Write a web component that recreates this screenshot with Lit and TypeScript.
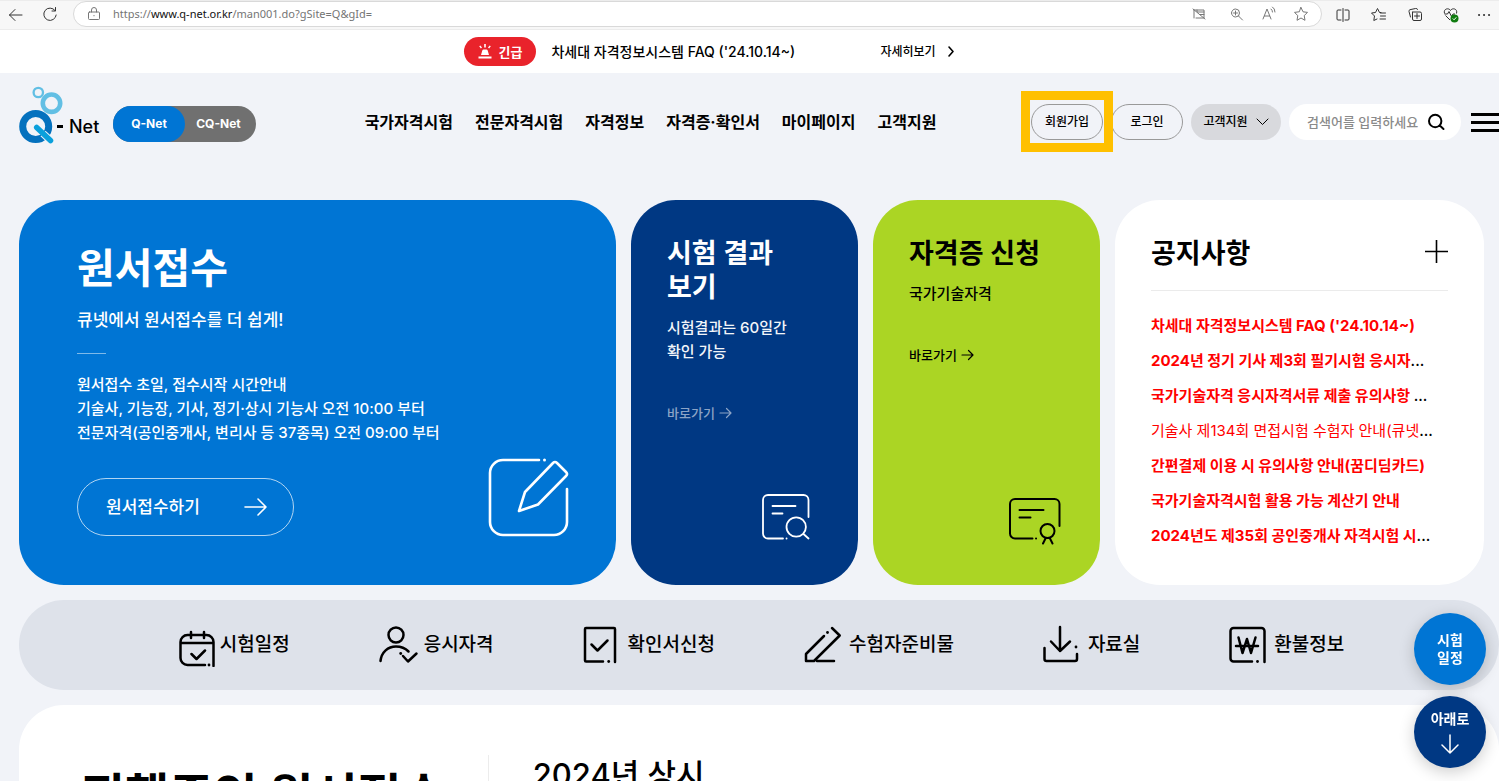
import { LitElement, html, css, svg, nothing } from "lit";
import { customElement } from "lit/decorators.js";

const line = (d: string, w = 20, h = 20, sw = 1) => html`
  <svg width=${w} height=${h} viewBox="0 0 ${w} ${h}" fill="none" stroke="currentColor" stroke-width=${sw}
    stroke-linecap="round" stroke-linejoin="round" aria-hidden="true"><path d=${d} /></svg>`;

const NAV = ["국가자격시험", "전문자격시험", "자격정보", "자격증·확인서", "마이페이지", "고객지원"];

const NOTICES = [
  { text: "차세대 자격정보시스템 FAQ ('24.10.14~)", cut: false, bold: true },
  { text: "2024년 정기 기사 제3회 필기시험 응시자", cut: true, bold: true },
  { text: "국가기술자격 응시자격서류 제출 유의사항 ", cut: true, bold: true },
  { text: "기술사 제134회 면접시험 수험자 안내(큐넷", cut: true, bold: false },
  { text: "간편결제 이용 시 유의사항 안내(꿈디딤카드)", cut: false, bold: true },
  { text: "국가기술자격시험 활용 가능 계산기 안내", cut: false, bold: true },
  { text: "2024년도 제35회 공인중개사 자격시험 시", cut: true, bold: true },
];

const QUICK = [
  { label: "시험일정", w: 36, h: 44, dot: [30, 42], d: "M34.5 43V19a7 7 0 0 0-7-7h-19a7 7 0 0 0-7 7v16a7 7 0 0 0 7 7H26M2 20H34M12 9v6M25 9v6M12.5 31l5 5 8.5-8.5" },
  { label: "응시자격", w: 40, h: 40, dot: [21.7, 28.5], d: "M9.5 10a7.5 7.5 0 1 0 15 0a7.5 7.5 0 1 0-15 0M1.5 36C2.5 27 9 21.5 17 21.5C22 21.5 26 23 29.5 26.5M24 31l5 5.5 8.5-8" },
  { label: "확인서신청", w: 40, h: 40, dot: [25.7, 36.5], d: "M32 37V4a1 1 0 0 0-1-1H3a1 1 0 0 0-1 1V35.500a1 1 0 0 0 1 1H20M8.500 19.500l6 6 10-10" },
  { label: "수험자준비물", w: 40, h: 40, dot: [23.5, 7.5], d: "M20 11L2 29V36H10L35.700 10.500L28 3M13 36H30" },
  { label: "자료실", w: 40, h: 40, dot: [33, 22], d: "M17 2V26M8 16.500L17 26L27 16.500M1.500 23V34a2 2 0 0 0 2 2H32a2 2 0 0 0 2-2V29" },
  { label: "환불정보", w: 40, h: 40, dot: [28.5, 36.5], d: "M35.500 37V6a3 3 0 0 0-3-3H4.500a3 3 0 0 0-3 3V33.500a3 3 0 0 0 3 3H23M9.500 12.500L13.500 28L18 14L22 28L26.500 12.500M7 21H29" },
];

@customElement("browser-bar")
export class BrowserBar extends LitElement {
  static styles = css`
    :host { display: flex; align-items: center; flex: none; height: 30px; background: #f7f7f7;
      border-bottom: 1px solid #ececec; border-top: 1px solid #ececec; color: #333; }
    svg { display: block; }
    button { display: grid; place-items: center; flex: none; width: 36px; height: 26px; padding: 0; border: 0; background: none; color: inherit; }
    .left { display: flex; width: 73px; }
    .back { width: 32px; }
    .last { width: 30px; }
    .address { display: flex; flex: 1; align-items: center; height: 24px; padding: 0 4px 0 10px; margin: 0 3px 2px 0;
      border: 1px solid #d9d9d9; border-radius: 13px; background: #fff; color: #777; }
    .address button { width: 32px; }
    .address .lock { width: 20px; margin-right: 9px; }
    .url { flex: 1; font: 11px/16px "Noto Sans", "Open Sans", sans-serif; color: #757575; }
    .host { color: #111; }
    .address .wide { margin-right: 6px; }
  `;
  render() {
    return html`
      <div class="left">
        <button class="back" aria-label="뒤로">${line("M16 10H3.500M9 4.500L3.500 10L9 15.500")}</button>
        <button aria-label="새로 고침">${line("M15 5.500A6.200 6.200 0 1 0 16.200 10M15.500 2.500V6H12")}</button>
      </div>
      <div class="address">
        <button class="lock" aria-label="사이트 정보">${line("M5.500 8h9a1 1 0 0 1 1 1v5.500a1 1 0 0 1-1 1h-9a1 1 0 0 1-1-1V9a1 1 0 0 1 1-1zM7.500 8V6a2.500 2.500 0 0 1 5 0v2M9.800 11.700h.4")}</button>
        <span class="url">https://<span class="host">www.q-net.or.kr</span>/man001.do?gSite=Q&amp;gId=</span>
        <button class="wide" aria-label="카메라 차단됨">${line("M5 6h10v8h-8M5 6v8M4 5l12 10M8 6v2h7M11 10.500h4")}</button>
        <button aria-label="확대">${line("M4.500 9a4 4 0 1 0 8 0a4 4 0 1 0-8 0M11.500 12l4 4M8.500 7v4M6.500 9h4")}</button>
        <button aria-label="소리내어 읽기">${line("M4 15L8 5L12 15M5.400 12H10.600M12 5q1.500 1 1.500 3M13.500 3q2.500 1.500 2.500 5")}</button>
        <button aria-label="즐겨찾기 추가">${line("M10 3.500l2 4.300 4.500.6-3.300 3.200.8 4.700-4-2.300-4 2.300.8-4.700-3.300-3.200 4.500-.6z")}</button>
      </div>
      <button aria-label="화면 분할">${line("M8 5H5a1 1 0 0 0-1 1v8a1 1 0 0 0 1 1h3M12 5h3a1 1 0 0 1 1 1v8a1 1 0 0 1-1 1h-3M10 3.500v13")}</button>
      <button aria-label="즐겨찾기">${line("M12 7.500L10.500 7.500L8.500 3.500L6.500 7.500L2.500 8L5.500 11L4.800 15.500L8 14M11.500 8h5M11.500 11h5M11 14h5.500")}</button>
      <button aria-label="컬렉션">${line("M8 7h7a1.500 1.500 0 0 1 1.500 1.500V14a1.500 1.500 0 0 1-1.500 1.500H9A1.500 1.500 0 0 1 7.500 14V7M12 8.500v5M9.500 11h5M5.500 12L4 6.500a1.500 1.500 0 0 1 1-1.800L10.500 3.500a1.500 1.500 0 0 1 2 1")}</button>
      <button aria-label="성능">
        <svg width="20" height="20" viewBox="0 0 20 20" fill="none" stroke="currentColor" aria-hidden="true">
          <path d="M3.500 8.500C2 3.500 8 2.500 9.500 5.500C11 2.500 17 3.500 15.500 8.500M4.500 10.500L9 15M3.500 9h3l1.500-2.500 2.500 5 1.500-2.500h2" />
          <circle cx="13.500" cy="13.500" r="4" fill="#107c10" stroke="none" /><path d="M11.800 13.500l1.300 1.300 2.200-2.500" stroke="#fff" />
        </svg>
      </button>
      <button class="last" aria-label="설정">${line("M5 10h.1M10 10h.1M15 10h.1", 20, 20, 2)}</button>
    `;
  }
}

@customElement("app-root")
export class AppRoot extends LitElement {
  static styles = css`
    :host { display: flex; flex-direction: column; height: 100vh; overflow: hidden; background: #f1f3f8; color: #000;
      font-family: Inter, "Noto Sans CJK KR", sans-serif; font-size: 15px; line-height: 24px; }
    * { box-sizing: border-box; }
    a { color: inherit; text-decoration: none; }
    h1, h2, p, ul { margin: 0; padding: 0; }
    ul { list-style: none; }
    button, input { font: inherit; color: inherit; }
    svg { display: block; flex: none; }

    .alert { display: flex; flex: none; align-items: center; justify-content: center; gap: 15px; height: 43px; padding-right: 78px; background: #fff; }
    .tag { display: flex; align-items: center; justify-content: center; gap: 6px; width: 72px; height: 29px; border-radius: 15px; background: #e9232b;
      color: #fff; font-size: 13px; font-weight: 700; }
    .alert-title { width: 314px; font-size: 14px; font-weight: 500; }
    .more { display: flex; align-items: center; gap: 7px; font-size: 12px; font-weight: 500; }

    .header { display: flex; flex: none; align-items: center; height: 98px; padding-left: 19px; }
    .logo { display: flex; align-items: center; width: 81px; margin: 0 13px 14px 0; font-size: 18px; font-weight: 500; }
    .logo-name { flex: 1; padding-top: 24px; white-space: nowrap; }
    .logo-name::before { content: ""; display: inline-block; width: 6px; height: 3px; margin-right: 6px; background: #000; vertical-align: 5px; }
    .site { display: flex; margin-top: 4px; height: 36px; border-radius: 18px; background: #707070; color: #fff; font-size: 12px; font-weight: 700; line-height: 35px; text-align: center; }
    .site-on { width: 72px; border-radius: 18px; background: #0075d4; }
    .site-off { width: 71px; padding-right: 4px; }
    .nav { display: flex; flex: 1; justify-content: center; gap: 22px; padding-left: 14px; font-size: 16px; font-weight: 700; white-space: nowrap; }
    .tools { display: flex; align-items: center; gap: 8px; font-size: 12px; font-weight: 500; }
    .pill { display: flex; align-items: center; justify-content: center; gap: 8px; width: 72px; height: 36px; padding: 0;
      border: 1px solid #999; border-radius: 18px; background: none; }
    .join { position: relative; }
    .join::after { content: ""; position: absolute; z-index: 2; inset: -14px -11px -13px -11px; border: 9px solid #ffc000; }
    .support { width: 90px; border: 0; background: #d8d9dd; }
    .search { display: flex; align-items: center; width: 172px; height: 36px; padding: 0 16px 0 18px; border-radius: 18px; background: #fff; }
    .search input { flex: 1; min-width: 0; padding: 0; border: 0; outline: 0; background: none; font-size: 13px; }
    .search input::placeholder { color: #8a8a8a; }
    .icon-button { padding: 0; border: 0; background: none; }
    .menu { display: flex; flex-direction: column; gap: 5px; width: 28px; margin-left: 2px; }
    .menu i { height: 3px; background: #000; }

    .cards { display: grid; flex: none; grid-template-columns: 597fr 227fr 227fr 369fr; gap: 15px; margin: 29px 15px 0 19px; }
    .card { display: flex; flex-direction: column; min-width: 0; min-height: 385px; padding: 37px 36px 39px; border-radius: 45px; font-weight: 500; }
    .card h2 { font-size: 27px; font-weight: 600; line-height: 34px; }
    .card .sub { margin-top: 11px; }
    .go { display: flex; align-items: center; gap: 4px; margin-top: 40px; font-size: 13px; line-height: 18px; }
    .card-icon { margin-top: auto; align-self: flex-end; }
    .card.apply { padding: 43px 47px 49px 58px; background: #0075d4; color: #fff; }
    .apply h1 { font-size: 41px; font-weight: 700; line-height: 50px; }
    .lead { margin-top: 14px; font-size: 17px; line-height: 26px; }
    .rule { width: 29px; height: 1px; margin: 20px 0 19px; background: #7fbae9; }
    .hours { line-height: 24px; }
    .apply-row { display: flex; align-items: flex-end; justify-content: space-between; margin-top: 13px; }
    .apply-button { display: flex; align-items: center; justify-content: space-between; width: 217px; height: 58px; padding: 0 26px 0 28px;
      border: 1px solid #b2d5f2; border-radius: 29px; font-size: 17px; }
    .result { background: #003883; color: #fff; }
    .result .sub { color: #f2f5f9; }
    .result .go { color: #8ca4c6; }
    .license { background: #abd524; }
    .card.notice { padding-bottom: 31px; background: #fff; }
    .notice-head { display: flex; align-items: center; justify-content: space-between; padding-bottom: 19px; border-bottom: 1px solid #ebebeb; }
    .notice-head .icon-button { padding-bottom: 5px; }
    .notices { margin-top: 17px; font-size: 15px; line-height: 35px; white-space: nowrap; }
    .notices b, .notices span { color: #f00; }
    .notices b { font-weight: 700; }
    .notices span { font-weight: 400; }

    .quick { display: flex; flex: none; align-items: center; justify-content: center; gap: 89px; height: 90px; margin: 15px 0 0 19px; padding-left: 5px;
      border-radius: 45px; background: #dee2ea; font-size: 19px; font-weight: 500; white-space: nowrap; }
    .quick a { display: flex; align-items: center; gap: 5px; }

    .ongoing { display: flex; flex: none; gap: 42px; height: 300px; margin: 15px 0 0 19px; padding: 50px 62px; border-radius: 45px; background: #fff; }
    .ongoing h2 { padding-top: 11px; font-size: 48px; font-weight: 700; line-height: 60px; }
    .ongoing-list { padding-left: 44px; border-left: 1px solid #ececec; font-size: 31px; font-weight: 500; line-height: 40px; }

    .floats { position: fixed; z-index: 3; right: 13px; bottom: 13px; display: grid; gap: 11px; }
    .float { display: flex; flex-direction: column; align-items: center; justify-content: center; width: 72px; height: 72px; border-radius: 50%;
      background: #0075d4; color: #fff; font-size: 14px; font-weight: 700; line-height: 18px; box-shadow: 0 4px 16px rgb(0 0 0 / 20%); }
    .down { gap: 6px; background: #003883; }
  `;

  private notice(n: (typeof NOTICES)[number]) {
    return html`<li><a href="#">${n.bold ? html`<b>${n.text}</b>` : html`<span>${n.text}</span>`}${n.cut ? "..." : nothing}</a></li>`;
  }

  private quick(q: (typeof QUICK)[number]) {
    return html`<a href="#">
      <svg width=${q.w} height=${q.h} viewBox="0 0 ${q.w} ${q.h}" fill="none" stroke="#000" stroke-width="2.5" stroke-linecap="round" stroke-linejoin="round" aria-hidden="true">
        <path d=${q.d} />${svg`<circle cx=${q.dot[0]} cy=${q.dot[1]} r="1.4" fill="#000" stroke="none" />`}
      </svg>${q.label}</a>`;
  }

  render() {
    return html`
      <browser-bar></browser-bar>
      <div class="alert">
        <span class="tag">
          <svg width="14" height="15" viewBox="0 0 14 15" fill="#fff" aria-hidden="true">
            <path d="M3 11L4.300 6.500Q4.600 5.500 5.600 5.500H8.400Q9.400 5.500 9.700 6.500L11 11ZM.5 12.500h13V14.500H.5ZM6.200 0h1.600v3.500H6.200ZM1.200 2.200L2.300 1.400 4 3.600 2.900 4.400ZM12.800 2.200L11.700 1.400 10 3.600 11.100 4.400Z" />
          </svg>긴급</span>
        <a class="alert-title" href="#">차세대 자격정보시스템 FAQ ('24.10.14~)</a>
        <a class="more" href="#">자세히보기 ${line("M6 2L10 6.500L6 11", 14, 13, 1.6)}</a>
      </div>

      <header class="header">
        <a class="logo" href="#">
          <svg width="38" height="58" viewBox="0 0 38 58" fill="none" overflow="visible" aria-hidden="true">
            <circle cx="19.300" cy="6.500" r="4.700" stroke="#62bfe4" stroke-width="2.300" />
            <circle cx="32.500" cy="17.200" r="8.700" stroke="#62bfe4" stroke-width="4.600" />
            <circle cx="16.700" cy="40.500" r="13" stroke="#0471be" stroke-width="7" />
            <path d="M24 47.500L31.500 54.500" stroke="#f1f3f8" stroke-width="7.500" />
            <path d="M17.700 41.500L31.500 54.500" stroke="#0aa0dc" stroke-width="5.500" stroke-linecap="round" />
          </svg>
          <span class="logo-name">Net</span>
        </a>
        <div class="site"><a class="site-on" href="#">Q-Net</a><a class="site-off" href="#">CQ-Net</a></div>
        <nav class="nav">${NAV.map((n) => html`<a href="#">${n}</a>`)}</nav>
        <div class="tools">
          <button class="pill join">회원가입</button>
          <button class="pill">로그인</button>
          <button class="pill support">고객지원 ${line("M1 1L6.500 6.500L12 1", 13, 8, 1)}</button>
          <form class="search">
            <input type="text" aria-label="검색어" placeholder="검색어를 입력하세요" />
            <button class="icon-button" type="button" aria-label="검색">${line("M2 8a6.200 6.200 0 1 0 12.400 0a6.200 6.200 0 1 0-12.400 0M12.800 12.500L16.500 16", 18, 18, 2)}</button>
          </form>
          <button class="icon-button menu" aria-label="전체 메뉴"><i></i><i></i><i></i></button>
        </div>
      </header>

      <section class="cards">
        <article class="card apply">
          <h1>원서접수</h1>
          <p class="lead">큐넷에서 원서접수를 더 쉽게!</p>
          <div class="rule"></div>
          <p class="hours">원서접수 초일, 접수시작 시간안내<br />기술사, 기능장, 기사, 정기·상시 기능사 오전 10:00 부터<br />전문자격(공인중개사, 변리사 등 37종목) 오전 09:00 부터</p>
          <div class="apply-row">
            <a class="apply-button" href="#">원서접수하기 ${line("M1 10H22M14 2L22 10L14 18", 23, 20, 1.6)}</a>
            <svg width="81" height="78" viewBox="0 0 81 78" fill="none" stroke="#fff" stroke-width="2.600" stroke-linecap="round" stroke-linejoin="round" overflow="visible" aria-hidden="true">
              <path d="M51 2H15A13 13 0 0 0 2 15V64A13 13 0 0 0 15 77H66A13 13 0 0 0 79 64V31M31 53L37 34L65 5Q67 3 69 5L78 14Q80 16 78 18L50 46.500Z" />
              <circle cx="56.500" cy="2" r="1.500" fill="#fff" stroke="none" />
            </svg>
          </div>
        </article>

        <article class="card result">
          <h2>시험 결과<br />보기</h2>
          <p class="sub">시험결과는 60일간<br />확인 가능</p>
          <a class="go" href="#">바로가기 ${line("M1 6H12M7.500 1.500L12 6L7.500 10.500", 13, 12, 1.2)}</a>
          <svg class="card-icon" width="60" height="52" viewBox="0 0 60 52" fill="none" stroke="#fff" stroke-width="1.800" stroke-linecap="round" stroke-linejoin="round" aria-hidden="true">
            <path d="M46.500 23V6a5 5 0 0 0-5-5H6a5 5 0 0 0-5 5V39.500a5 5 0 0 0 5 5H21M10.500 12H33.500M10.500 19.500H20.500M24.500 33a9.700 9.700 0 1 0 19.400 0a9.700 9.700 0 1 0-19.400 0M41.500 40L46.500 44.500M24.500 44.500h.1" />
          </svg>
        </article>

        <article class="card license">
          <h2>자격증 신청</h2>
          <p class="sub">국가기술자격</p>
          <a class="go" href="#">바로가기 ${line("M1 6H12M7.500 1.500L12 6L7.500 10.500", 13, 12, 1.2)}</a>
          <svg class="card-icon" width="55" height="48" viewBox="0 0 55 48" fill="none" stroke="#000" stroke-width="2" stroke-linecap="round" stroke-linejoin="round" aria-hidden="true">
            <path d="M50.500 28V6a5 5 0 0 0-5-5H6a5 5 0 0 0-5 5V35.500a5 5 0 0 0 5 5H23.500M10.500 12H34.500M10.500 19.500H21.500M31.500 33a7 7 0 1 0 14 0a7 7 0 1 0-14 0M36.500 40.500L34 45.500M41 40.500L43.500 45.500M27 40.500h.1" />
          </svg>
        </article>

        <article class="card notice">
          <div class="notice-head">
            <h2>공지사항</h2>
            <button class="icon-button" aria-label="공지사항 더보기">${line("M0 11.500H23M11.500 0V23", 23, 23, 1.6)}</button>
          </div>
          <ul class="notices">${NOTICES.map((n) => this.notice(n))}</ul>
        </article>
      </section>

      <nav class="quick">${QUICK.map((q) => this.quick(q))}</nav>

      <section class="ongoing">
        <h2>진행중인 원서접수</h2>
        <div class="ongoing-list">2024년 상시</div>
      </section>

      <div class="floats">
        <a class="float" href="#"><span>시험</span><span>일정</span></a>
        <a class="float down" href="#">아래로 ${line("M9 1V19M1 11L9 19L17 11", 18, 20, 1.5)}</a>
      </div>
    `;
  }
}
